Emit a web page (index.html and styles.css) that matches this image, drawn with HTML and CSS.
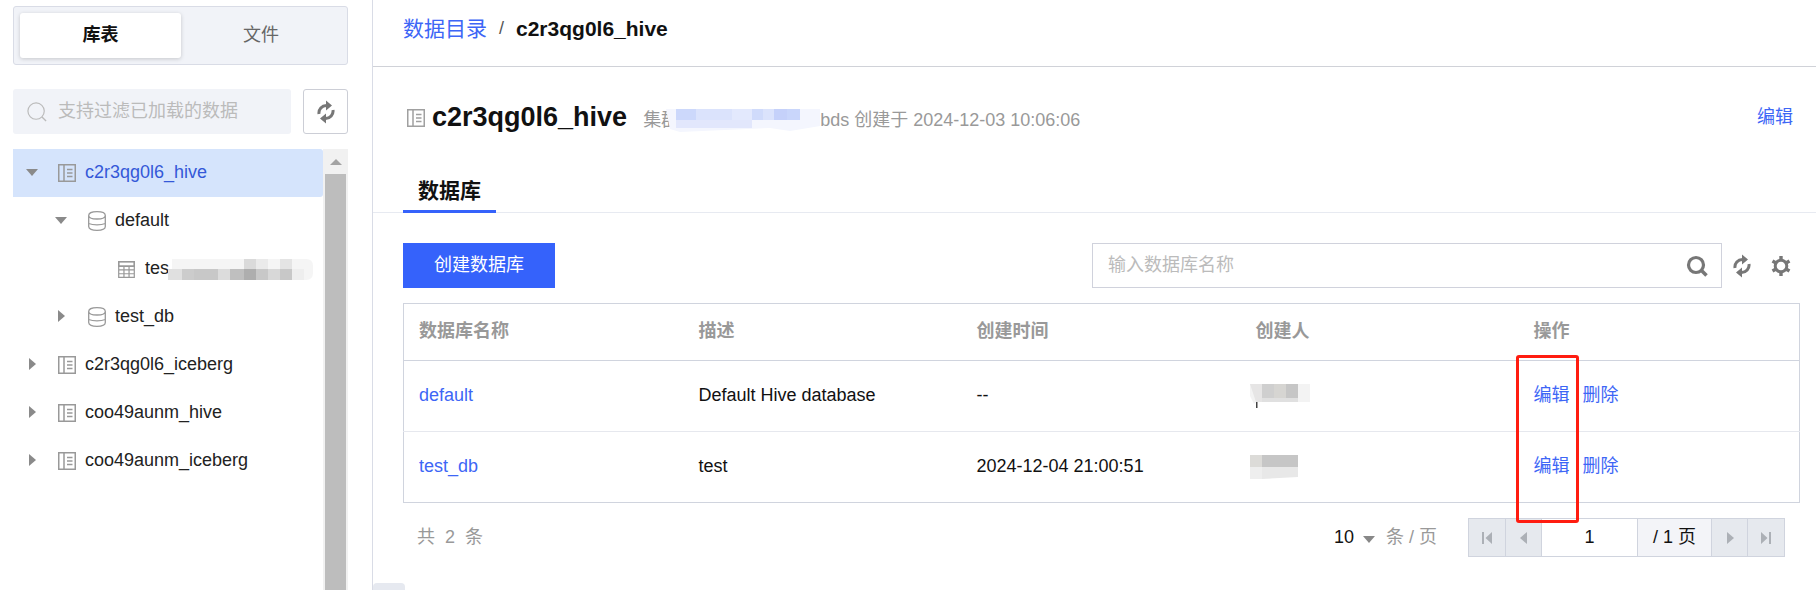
FILE: index.html
```html
<!DOCTYPE html>
<html lang="zh-CN">
<head>
<meta charset="utf-8">
<title>数据目录</title>
<link rel="stylesheet" href="styles.css">
</head>
<body>
<svg class="defs" width="0" height="0" aria-hidden="true">
  <defs>
    <symbol id="i-catalog" viewBox="0 0 18 18"><path d="M.75.75h16.5v16.5H.75zM6 .75v16.5M9 5.5h5.5M9 9h5.5M9 12.5h5.5" fill="none" stroke="currentColor" stroke-width="1.5"/></symbol>
    <symbol id="i-db" viewBox="0 0 18 20"><path d="M.7 4.5C.7 2 4 .7 9 .7s8.300 1.300 8.300 3.800v11c0 2.500-3.300 3.800-8.300 3.800s-8.300-1.300-8.300-3.800zM.7 4.500c0 2.300 3.300 3.500 8.300 3.500s8.300-1.200 8.300-3.500M.7 12.500c2.500 1 5.300 1.300 8.300 1.300s5.800-.3 8.300-1.300" fill="none" stroke="currentColor" stroke-width="1.300"/></symbol>
    <symbol id="i-table" viewBox="0 0 18 18"><path d="M.75.75h16.500v16.500H.75zM.75 5.500h16.500M.75 9.500h16.500M.75 13.500h16.500M6.300 5.500v11.700M11.700 5.500v11.700" fill="none" stroke="currentColor" stroke-width="1.300"/><path d="M.75.75h16.500v4.750H.75z" fill="none" stroke="currentColor" stroke-width="1.500"/></symbol>
    <symbol id="i-refresh" viewBox="0 0 18 24"><path d="M2 14A7.500 7.500 0 0 1 9.500 5.500M16 10A7.500 7.500 0 0 1 8.500 18.500" fill="none" stroke="currentColor" stroke-width="3"/><path d="M9 .5l6 5-6 5zM9 13.500l-6 5 6 5z" fill="currentColor"/></symbol>
  </defs>
</svg>

<div class="app">
  <aside class="side">
    <div class="seg">
      <div class="seg-item seg-on">库表</div>
      <div class="seg-item">文件</div>
    </div>
    <div class="filter">
      <div class="filter-box">
        <svg class="filter-icon" viewBox="0 0 22 22"><circle cx="10" cy="10" r="9" fill="none" stroke="currentColor" stroke-width="1.300"/><path d="M16.500 16.500l4.500 4.500" fill="none" stroke="currentColor" stroke-width="1.500"/></svg>
        <span>支持过滤已加载的数据</span>
      </div>
      <button class="icon-btn"><svg class="refresh-lg"><use href="#i-refresh"/></svg></button>
    </div>
    <div class="tree-wrap">
      <ul class="tree">
        <li class="node node-on lv0"><i class="arr arr-d"></i><svg class="ic"><use href="#i-catalog"/></svg><span>c2r3qg0l6_hive</span></li>
        <li class="node lv1"><i class="arr arr-d"></i><svg class="ic ic-db"><use href="#i-db"/></svg><span>default</span></li>
        <li class="node lv2"><svg class="ic"><use href="#i-table"/></svg><span>tes</span><svg class="mosaic-tree" viewBox="0 0 145 26"><path d="M4 3h134q7 0 7 7v7q0 7-7 7H4z" fill="#f5f5f5"/><path d="M76 3h12v10H76z" fill="#dadada"/><path d="M88 3h12v10H88z" fill="#eaeaea"/><path d="M112 3h12v10h-12z" fill="#e4e4e4"/><path d="M0 13h14v11H0z" fill="#e0e0e0"/><path d="M14 13h12v11H14z" fill="#cccccc"/><path d="M26 13h24v11H26z" fill="#c8c8c8"/><path d="M50 13h12v11H50z" fill="#dcdcdc"/><path d="M62 13h14v11H62z" fill="#bfbfbf"/><path d="M76 13h12v11H76z" fill="#aeaeae"/><path d="M88 13h12v11H88z" fill="#c8c8c8"/><path d="M100 13h12v11h-12z" fill="#d8d8d8"/><path d="M112 13h12v11h-12z" fill="#c8c8c8"/><path d="M124 13h12v11h-12z" fill="#eeeeee"/></svg></li>
        <li class="node lv1"><i class="arr arr-r"></i><svg class="ic ic-db"><use href="#i-db"/></svg><span>test_db</span></li>
        <li class="node lv0"><i class="arr arr-r"></i><svg class="ic"><use href="#i-catalog"/></svg><span>c2r3qg0l6_iceberg</span></li>
        <li class="node lv0"><i class="arr arr-r"></i><svg class="ic"><use href="#i-catalog"/></svg><span>coo49aunm_hive</span></li>
        <li class="node lv0"><i class="arr arr-r"></i><svg class="ic"><use href="#i-catalog"/></svg><span>coo49aunm_iceberg</span></li>
      </ul>
      <div class="sbar"><div class="sbar-btn"><i></i></div><div class="sbar-thumb"></div></div>
    </div>
  </aside>

  <main class="main">
    <nav class="crumb"><a class="crumb-link">数据目录</a><span class="crumb-sep">/</span><strong>c2r3qg0l6_hive</strong></nav>

    <header class="head">
      <svg class="ic"><use href="#i-catalog"/></svg>
      <h1>c2r3qg0l6_hive</h1>
      <p class="meta">集群<svg class="mosaic-meta" viewBox="0 0 154 23"><path d="M0 0h154v17l-30 5-20-3-90 4-10-3z" fill="#f4f6fe"/><path d="M10 0h20v11H10z" fill="#ccd8fb"/><path d="M30 0h36v11H30z" fill="#dbe3fc"/><path d="M66 0h20v11H66z" fill="#e3e9fd"/><path d="M86 0h11v11H86z" fill="#d0dbfb"/><path d="M97 0h11v11H97z" fill="#dbe3fc"/><path d="M108 0h13v11h-13z" fill="#c5d1fa"/><path d="M121 0h13v11h-13z" fill="#c9d6fb"/><path d="M10 11h76v8H10z" fill="#e2e7fc"/></svg>bds 创建于 2024-12-03 10:06:06</p>
      <a class="link head-edit">编辑</a>
    </header>

    <div class="tabs"><div class="tab">数据库</div></div>

    <div class="toolbar">
      <button class="primary">创建数据库</button>
      <div class="tools">
        <div class="search">
          <span>输入数据库名称</span>
          <svg class="search-ic" viewBox="0 0 22 22"><circle cx="10" cy="10" r="7.500" fill="none" stroke="currentColor" stroke-width="3.200"/><path d="M15 15l5.500 5.500" fill="none" stroke="currentColor" stroke-width="3.500"/></svg>
        </div>
        <svg class="refresh-sm"><use href="#i-refresh"/></svg>
        <svg class="gear" viewBox="0 0 20 22"><circle cx="10" cy="11" r="5.800" fill="none" stroke="currentColor" stroke-width="3"/><path d="M10 1v4M10 17v4M1.500 6l3.500 2M15 14l3.500 2M1.500 16l3.500-2M15 8l3.500-2" fill="none" stroke="currentColor" stroke-width="3.400"/></svg>
      </div>
    </div>

    <table class="grid">
      <colgroup><col class="c1"><col class="c2"><col class="c3"><col class="c4"><col></colgroup>
      <thead>
        <tr><th>数据库名称</th><th>描述</th><th>创建时间</th><th>创建人</th><th>操作</th></tr>
      </thead>
      <tbody>
        <tr>
          <td><a class="link">default</a></td><td>Default Hive database</td><td>--</td>
          <td><svg class="mosaic-user" viewBox="0 0 60 24"><path d="M0 0h60v18H6l-2 2L0 12z" fill="#f3f3f3"/><path d="M0 0h12v18H6z" fill="#e6e5e5"/><path d="M12 0h12v14H12z" fill="#cfcfcf"/><path d="M24 0h12v14H24z" fill="#d6d5d2"/><path d="M36 0h12v14H36z" fill="#c6c6c6"/><path d="M12 14h36v4H12z" fill="#e0e0e0"/><path d="M6 18h1.500v6H6z" fill="#444"/></svg></td>
          <td><a class="link">编辑</a><a class="link op">删除</a></td>
        </tr>
        <tr>
          <td><a class="link">test_db</a></td><td>test</td><td>2024-12-04 21:00:51</td>
          <td><svg class="mosaic-user" viewBox="0 0 60 24"><path d="M0 0h12v24H0z" fill="#eee"/><path d="M0 0h12v12H0z" fill="#dcdbd8"/><path d="M12 0h36v12H12z" fill="#c6c6c6"/><path d="M12 12h36v10l-36 2z" fill="#e8e8e8"/></svg></td>
          <td><a class="link">编辑</a><a class="link op">删除</a></td>
        </tr>
      </tbody>
    </table>

    <div class="foot">
      <div class="total">共<b>2</b>条</div>
      <div class="pagesize"><span class="ps-val">10</span><i class="caret"></i><span>条 / 页</span></div>
      <div class="pager">
        <div class="pg-btn pg-first"><svg viewBox="0 0 12 14"><path d="M1 1h2v12H1zM11 1v12L4.500 7z" fill="currentColor"/></svg></div>
        <div class="pg-btn"><svg viewBox="0 0 12 14"><path d="M9 1v12L2 7z" fill="currentColor"/></svg></div>
        <div class="pg-input">1</div>
        <div class="pg-total">/ 1 页</div>
        <div class="pg-btn"><svg viewBox="0 0 12 14"><path d="M3 1v12l7-6z" fill="currentColor"/></svg></div>
        <div class="pg-btn pg-last"><svg viewBox="0 0 12 14"><path d="M1 1v12l6.500-6zM9 1h2v12H9z" fill="currentColor"/></svg></div>
      </div>
    </div>

    <div class="mark"></div>
    <div class="handle"></div>
  </main>
</div>
</body>
</html>
```

FILE: styles.css
```css
* { box-sizing: border-box; }
html, body { margin: 0; padding: 0; height: 100%; background: #fff; overflow: hidden; }
body { font: 18px/1.4 "Liberation Sans", "Noto Sans CJK SC", sans-serif; color: #000; }
.defs { position: absolute; }
ul { list-style: none; margin: 0; padding: 0; }
i { display: block; }
.app { display: flex; height: 590px; }

/* sidebar */
.side { width: 373px; flex: none; border-right: 1px solid #d9dce6; padding: 6px 24px 0 13px; display: flex; flex-direction: column; }
.seg { height: 59px; display: flex; padding: 6px; background: #f1f3f8; border: 1px solid #d9dce6; border-radius: 3px; }
.seg-item { flex: 1; display: flex; align-items: center; justify-content: center; color: #666; }
.seg-on { flex: none; width: 161px; background: #fff; color: #111; font-weight: 700; border-radius: 3px; box-shadow: 0 1px 4px rgba(0,0,0,.18); }
.filter { display: flex; gap: 12px; margin-top: 24px; height: 45px; }
.filter-box { flex: 1; display: flex; align-items: center; gap: 11px; padding-left: 14px; background: #f1f3f8; border-radius: 3px; color: #bbb; }
.filter-icon { width: 20px; height: 20px; color: #bbb; }
.icon-btn { width: 45px; padding: 0; display: flex; align-items: center; justify-content: center; background: #fff; border: 1px solid #ccced6; border-radius: 3px; color: #777; }
.refresh-lg { width: 18px; height: 24px; }
.tree-wrap { display: flex; margin-top: 15px; flex: 1; min-height: 0; }
.tree { flex: 1; }
.node { position: relative; display: flex; align-items: center; height: 48px; color: #222; white-space: nowrap; }
.node-on { background: #d5e4fc; color: #3458d8; border-radius: 0 3px 3px 0; }
.lv0 { padding-left: 45px; }
.lv1 { padding-left: 75px; }
.lv2 { padding-left: 105px; }
.ic { width: 18px; height: 18px; margin-right: 9px; color: #999; flex: none; }
.ic-db { height: 20px; }
.lv2 .ic { width: 17px; height: 17px; margin-right: 10px; }
.arr { position: absolute; width: 0; height: 0; border-style: solid; border-color: transparent; }
.arr-d { border-width: 7px 6px 0; border-top-color: #8a8a8a; margin-left: -32px; top: 20px; }
.lv1 .arr-d { margin-left: -33px; }
.arr-r { border-width: 6px 0 6px 7px; border-left-color: #8a8a8a; margin-left: -29px; top: 17px; }
.lv1 .arr-r { margin-left: -30px; }
.mosaic-tree { width: 145px; height: 26px; margin: 0 0 0 -1px; }
.sbar { width: 25px; flex: none; background: #f1f1f1; padding: 0 2px; }
.sbar-btn { height: 25px; display: flex; align-items: center; justify-content: center; }
.sbar-btn i { width: 0; height: 0; border: 6px solid transparent; border-top: 0; border-bottom: 6px solid #a3a3a3; }
.sbar-thumb { height: 416px; width: 21px; background: #bdbdbd; }

/* main */
.main { position: relative; flex: 1; min-width: 0; }
.crumb { height: 67px; border-bottom: 1px solid #d0d2d8; padding: 0 0 8px 30px; display: flex; align-items: center; font-size: 21px; }
.crumb-link { color: #3d66f6; }
.crumb-sep { margin: 0 12px; color: #555; font-size: 18px; }
.crumb strong { font-weight: 700; color: #111; }
.head { display: flex; align-items: center; height: 47px; margin-top: 27px; padding: 0 23px 0 34px; }
.head .ic { margin-right: 7px; color: #a0a0a0; }
.head h1 { margin: 0; font-size: 27px; font-weight: 700; color: #111; line-height: 1; }
.meta { margin: 6px 0 0 16px; color: #999; display: flex; align-items: center; }
.mosaic-meta { width: 154px; height: 23px; margin-left: -13px; position: relative; }
.link { color: #3d66f6; }
.head-edit { margin-left: auto; }
.tabs { margin-top: 28px; height: 44px; padding-left: 30px; border-bottom: 1px solid #e7eaf1; }
.tab { width: 93px; height: 44px; text-align: center; font-size: 21px; line-height: 44px; font-weight: 700; color: #111; border-bottom: 3px solid #3562fb; }
.toolbar { display: flex; justify-content: space-between; margin-top: 30px; padding: 0 16px 0 30px; }
.primary { width: 152px; height: 45px; border: 0; padding: 0; background: #3562fb; color: #fff; font: inherit; }
.tools { display: flex; align-items: center; }
.search { width: 630px; height: 45px; border: 1px solid #d0d2dc; display: flex; align-items: center; justify-content: space-between; padding: 0 13px 0 15px; color: #bbb; }
.search-ic { width: 22px; height: 22px; color: #777; }
.refresh-sm { width: 18px; height: 24px; color: #777; margin-left: 11px; }
.gear { width: 20px; height: 22px; color: #777; margin: 0 9px 0 20px; }
.grid { width: 1397px; margin: 15px 0 0 30px; border-collapse: collapse; table-layout: fixed; border: 1px solid #d0d4de; }
.c1 { width: 280px; }
.c2 { width: 278px; }
.c3 { width: 279px; }
.c4 { width: 278px; }
.grid th, .grid td { padding: 0 0 0 15px; text-align: left; }
.grid th { height: 57px; color: #999; font-weight: 700; border-bottom: 1px solid #d0d4de; }
.grid td { height: 71px; border-bottom: 1px solid #e6e8ee; color: #111; }
.grid tr:last-child td { border-bottom: 0; }
.op { margin-left: 13px; }
.mosaic-user { display: block; width: 60px; height: 24px; margin-left: -6px; }
.foot { display: flex; align-items: center; height: 39px; margin-top: 15px; padding: 0 31px 0 44px; color: #999; }
.total { display: flex; gap: 10px; }
.total b { font-weight: 400; }
.pagesize { margin-left: auto; display: flex; align-items: center; }
.ps-val { color: #111; }
.caret { width: 0; height: 0; border-style: solid; border-width: 7px 6px 0; border-color: #888 transparent transparent; margin: 3px 11px 0 9px; }
.pager { display: flex; height: 39px; margin-left: 31px; border: 1px solid #d0d4de; color: #111; }
.pg-btn { width: 36px; display: flex; align-items: center; justify-content: center; background: #e6e9ee; border-right: 1px solid #d0d4de; color: #acb0b6; }
.pg-first { width: 37px; }
.pg-last { border-right: 0; }
.pg-btn svg { width: 12px; height: 14px; }
.pg-input { width: 96px; display: flex; align-items: center; justify-content: center; background: #fff; border-right: 1px solid #d0d4de; }
.pg-total { width: 74px; display: flex; align-items: center; justify-content: center; background: #f3f4f8; border-right: 1px solid #d0d4de; }
.mark { position: absolute; left: 1143px; top: 355px; width: 63px; height: 168px; border: 3px solid #ff1c10; border-radius: 3px; pointer-events: none; }
.handle { position: absolute; left: 0; bottom: 0; width: 32px; height: 7px; background: #e6e9f0; border-radius: 4px 4px 0 0; }
```
